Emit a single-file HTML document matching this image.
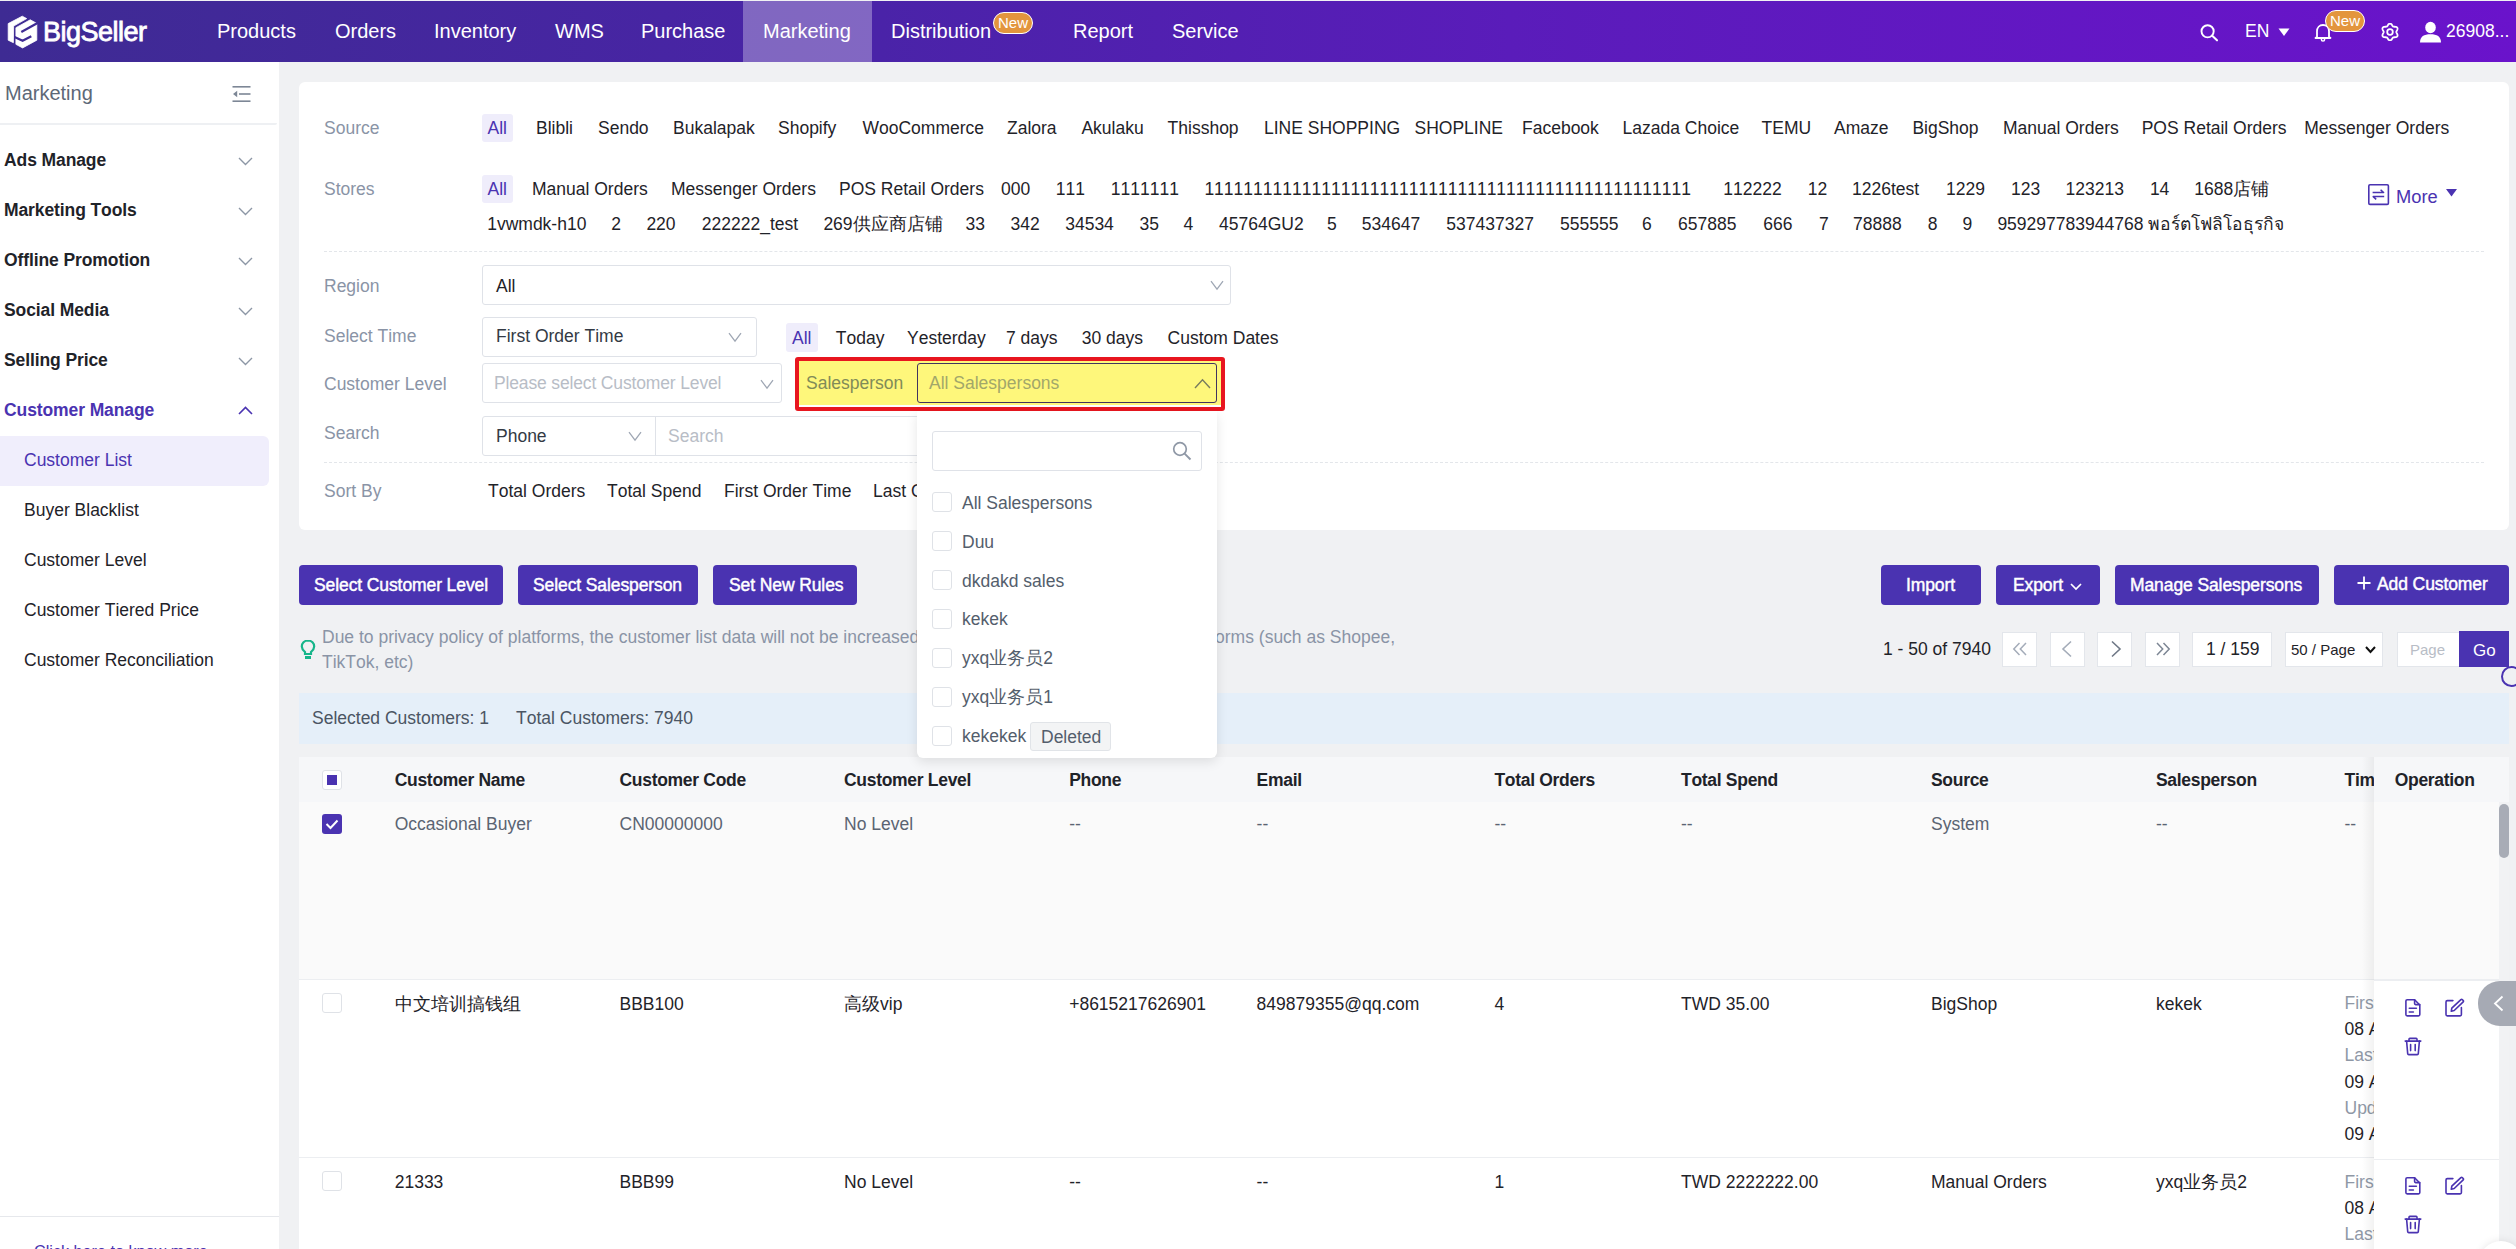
<!DOCTYPE html><html><head><meta charset="utf-8"><title>BigSeller Customer List</title><style>
*{margin:0;padding:0}
html,body{width:2516px;height:1249px;overflow:hidden;background:#f0f1f3}
body{position:relative;font-family:"Liberation Sans",sans-serif;font-kerning:none}
.t{position:absolute;white-space:nowrap}
.r{position:absolute}
.badge{background:#e3953d;border:1.5px solid #fff;border-radius:11px;box-sizing:border-box;color:#fff;font-size:15px;line-height:19px;text-align:center;font-family:"Liberation Sans",sans-serif}
</style></head><body>
<div class="r" style="left:0px;top:0px;width:2516px;height:1249px;background:#f0f1f3;"></div>
<div class="r" style="left:0px;top:1px;width:2516px;height:61px;background:linear-gradient(90deg,#3e2b93 0%,#4a23a8 35%,#5a1cba 60%,#6a13cb 100%);"></div>
<div class="r" style="left:743px;top:1px;width:129px;height:61px;background:rgba(255,255,255,0.31);"></div>
<svg class="r" style="left:0px;top:0px" width="45" height="55" viewBox="0 0 45 55">
<g fill="#fff" stroke="#fff" stroke-width="0.8" stroke-linejoin="round">
<path d="M8.2,23.6 L22.25,16.2 L26.7,18.6 L13.6,26.1 L13.4,42.7 L8.2,40.2 Z"/>
<path d="M15.9,27.7 L30.25,19.8 L36.8,23.4 L36.8,40.2 L22.6,47.9 L15.9,44.3 Z"/>
</g>
<g fill="none" stroke="#3f2b95" stroke-width="2.3">
<path d="M21.3,31.9 L38,22.8"/>
<path d="M14.5,37 L22.6,40.8 L31.3,36.2"/>
</g></svg>
<div class="t " style="left:43px;top:15.14px;font-size:27px;line-height:34px;color:#fff;letter-spacing:-0.5px;-webkit-text-stroke:0.8px #fff;">BigSeller</div>
<div class="t " style="left:217px;top:19.07px;font-size:20px;line-height:25px;color:#fff;">Products</div>
<div class="t " style="left:335px;top:19.07px;font-size:20px;line-height:25px;color:#fff;">Orders</div>
<div class="t " style="left:434px;top:19.07px;font-size:20px;line-height:25px;color:#fff;">Inventory</div>
<div class="t " style="left:555px;top:19.07px;font-size:20px;line-height:25px;color:#fff;">WMS</div>
<div class="t " style="left:641px;top:19.07px;font-size:20px;line-height:25px;color:#fff;">Purchase</div>
<div class="t " style="left:763px;top:19.07px;font-size:20px;line-height:25px;color:#fff;">Marketing</div>
<div class="t " style="left:891px;top:19.07px;font-size:20px;line-height:25px;color:#fff;">Distribution</div>
<div class="t " style="left:1073px;top:19.07px;font-size:20px;line-height:25px;color:#fff;">Report</div>
<div class="t " style="left:1172px;top:19.07px;font-size:20px;line-height:25px;color:#fff;">Service</div>
<div class="r badge" style="left:993px;top:12px;width:40px;height:22px;">New</div>
<svg class="r" style="left:2200px;top:24px" width="20" height="18" viewBox="0 0 20 18">
<circle cx="7.6" cy="7.3" r="6.1" fill="none" stroke="#fff" stroke-width="1.9"/>
<path d="M12.2,11.8 L17,16.3" stroke="#fff" stroke-width="2.1" stroke-linecap="round"/></svg>
<div class="t " style="left:2245px;top:19.94px;font-size:17.5px;line-height:22px;color:#fff;">EN</div>
<svg class="r" style="left:2278px;top:28px" width="12" height="9" viewBox="0 0 12 9"><path d="M0.5,0.5 L11.5,0.5 L6,8 Z" fill="#fff"/></svg>
<svg class="r" style="left:2314px;top:23px" width="18" height="19" viewBox="0 0 18 19">
<path d="M3,13.8 L3,8.3 C3,4.6 5.4,2 9,2 C12.6,2 15,4.6 15,8.3 L15,13.8 L16.5,15 L1.5,15 Z" fill="none" stroke="#fff" stroke-width="1.8" stroke-linejoin="round"/>
<circle cx="9" cy="16.4" r="1.6" fill="none" stroke="#fff" stroke-width="1.5"/></svg>
<div class="r badge" style="left:2325px;top:10px;width:40px;height:22px;">New</div>
<svg class="r" style="left:2381px;top:22.5px" width="18" height="18" viewBox="0 0 18 18">
<path d="M9.00,0.50 L9.73,0.68 L10.38,1.17 L10.92,1.85 L11.34,2.56 L11.72,3.16 L12.15,3.54 L12.70,3.72 L13.40,3.75 L14.23,3.77 L15.09,3.89 L15.84,4.21 L16.36,4.75 L16.57,5.47 L16.47,6.28 L16.15,7.08 L15.75,7.81 L15.42,8.44 L15.30,9.00 L15.42,9.56 L15.75,10.19 L16.15,10.92 L16.47,11.72 L16.57,12.53 L16.36,13.25 L15.84,13.79 L15.09,14.11 L14.23,14.23 L13.40,14.25 L12.70,14.28 L12.15,14.46 L11.72,14.84 L11.34,15.44 L10.92,16.15 L10.38,16.83 L9.73,17.32 L9.00,17.50 L8.27,17.32 L7.62,16.83 L7.08,16.15 L6.66,15.44 L6.28,14.84 L5.85,14.46 L5.30,14.28 L4.60,14.25 L3.77,14.23 L2.91,14.11 L2.16,13.79 L1.64,13.25 L1.43,12.53 L1.53,11.72 L1.85,10.92 L2.25,10.19 L2.58,9.56 L2.70,9.00 L2.58,8.44 L2.25,7.81 L1.85,7.08 L1.53,6.28 L1.43,5.47 L1.64,4.75 L2.16,4.21 L2.91,3.89 L3.77,3.77 L4.60,3.75 L5.30,3.72 L5.85,3.54 L6.28,3.16 L6.66,2.56 L7.08,1.85 L7.62,1.17 L8.27,0.68 L9.00,0.50 Z" fill="none" stroke="#fff" stroke-width="1.8" stroke-linejoin="round"/>
<circle cx="9" cy="9" r="2.8" fill="none" stroke="#fff" stroke-width="1.8"/></svg>
<svg class="r" style="left:2419px;top:21px" width="23" height="22" viewBox="0 0 23 22">
<ellipse cx="11.5" cy="6.5" rx="5.3" ry="5.8" fill="#fff"/>
<path d="M1,21.5 C1,15.5 5,13.3 11.5,13.3 C18,13.3 22,15.5 22,21.5 Z" fill="#fff"/></svg>
<div class="t " style="left:2446px;top:20.44px;font-size:17.5px;line-height:22px;color:#fff;">26908...</div>
<div class="r" style="left:0px;top:62px;width:279px;height:1187px;background:#fff;"></div>
<div class="r" style="left:0px;top:123px;width:277px;height:1.5px;background:#eef0f3;border-radius:0 0 3px 0;"></div>
<div class="t " style="left:5px;top:80.57px;font-size:20px;line-height:25px;color:#5d6877;">Marketing</div>
<svg class="r" style="left:232px;top:85px" width="19" height="18" viewBox="0 0 19 18">
<rect x="0.5" y="1" width="18" height="1.6" fill="#7d8796"/>
<rect x="7" y="8.2" width="11.5" height="1.6" fill="#7d8796"/>
<rect x="0.5" y="15.4" width="18" height="1.6" fill="#7d8796"/>
<path d="M1,9 L5.2,5.8 L5.2,12.2 Z" fill="#7d8796"/></svg>
<div class="t " style="left:4px;top:148.94px;font-size:17.5px;line-height:22px;color:#1f2329;font-weight:700;letter-spacing:-0.1px;">Ads Manage</div>
<svg class="r" style="left:238px;top:157px" width="15" height="9" viewBox="0 0 15 9"><path d="M1,1 L7.5,7.5 L14,1" fill="none" stroke="#8d97a6" stroke-width="1.4"/></svg>
<div class="t " style="left:4px;top:198.94px;font-size:17.5px;line-height:22px;color:#1f2329;font-weight:700;letter-spacing:-0.1px;">Marketing Tools</div>
<svg class="r" style="left:238px;top:207px" width="15" height="9" viewBox="0 0 15 9"><path d="M1,1 L7.5,7.5 L14,1" fill="none" stroke="#8d97a6" stroke-width="1.4"/></svg>
<div class="t " style="left:4px;top:248.94px;font-size:17.5px;line-height:22px;color:#1f2329;font-weight:700;letter-spacing:-0.1px;">Offline Promotion</div>
<svg class="r" style="left:238px;top:257px" width="15" height="9" viewBox="0 0 15 9"><path d="M1,1 L7.5,7.5 L14,1" fill="none" stroke="#8d97a6" stroke-width="1.4"/></svg>
<div class="t " style="left:4px;top:298.94px;font-size:17.5px;line-height:22px;color:#1f2329;font-weight:700;letter-spacing:-0.1px;">Social Media</div>
<svg class="r" style="left:238px;top:307px" width="15" height="9" viewBox="0 0 15 9"><path d="M1,1 L7.5,7.5 L14,1" fill="none" stroke="#8d97a6" stroke-width="1.4"/></svg>
<div class="t " style="left:4px;top:348.94px;font-size:17.5px;line-height:22px;color:#1f2329;font-weight:700;letter-spacing:-0.1px;">Selling Price</div>
<svg class="r" style="left:238px;top:357px" width="15" height="9" viewBox="0 0 15 9"><path d="M1,1 L7.5,7.5 L14,1" fill="none" stroke="#8d97a6" stroke-width="1.4"/></svg>
<div class="t " style="left:4px;top:398.94px;font-size:17.5px;line-height:22px;color:#4a33b1;font-weight:700;letter-spacing:-0.1px;">Customer Manage</div>
<svg class="r" style="left:238px;top:406px" width="15" height="9" viewBox="0 0 15 9"><path d="M1,8 L7.5,1.5 L14,8" fill="none" stroke="#4a33b1" stroke-width="1.6"/></svg>
<div class="r" style="left:0px;top:436px;width:269px;height:50px;background:#f0eefc;border-radius:0 6px 6px 0;"></div>
<div class="t " style="left:24px;top:448.94px;font-size:17.5px;line-height:22px;color:#4a33b1;">Customer List</div>
<div class="t " style="left:24px;top:498.94px;font-size:17.5px;line-height:22px;color:#1f2329;">Buyer Blacklist</div>
<div class="t " style="left:24px;top:548.94px;font-size:17.5px;line-height:22px;color:#1f2329;">Customer Level</div>
<div class="t " style="left:24px;top:598.94px;font-size:17.5px;line-height:22px;color:#1f2329;">Customer Tiered Price</div>
<div class="t " style="left:24px;top:648.94px;font-size:17.5px;line-height:22px;color:#1f2329;">Customer Reconciliation</div>
<div class="r" style="left:0px;top:1216px;width:279px;height:1px;background:#e6e8ec;"></div>
<div class="t " style="left:34px;top:1241.39px;font-size:16.2px;line-height:20px;color:#4a33b1;">Click here to know more</div>
<div class="r" style="left:299px;top:82px;width:2210px;height:448px;background:#fff;border-radius:6px;"></div>
<div class="t " style="left:324px;top:116.94px;font-size:17.5px;line-height:22px;color:#8a94a6;">Source</div>
<div class="r" style="left:482px;top:114px;width:31px;height:28px;background:#efedfb;border-radius:3px;"></div>
<div class="t " style="left:487.5px;top:116.94px;font-size:17.5px;line-height:22px;color:#4a33b1;">All</div>
<div class="t " style="left:536px;top:116.94px;font-size:17.5px;line-height:22px;color:#1f2329;">Blibli</div>
<div class="t " style="left:598px;top:116.94px;font-size:17.5px;line-height:22px;color:#1f2329;">Sendo</div>
<div class="t " style="left:673px;top:116.94px;font-size:17.5px;line-height:22px;color:#1f2329;">Bukalapak</div>
<div class="t " style="left:778px;top:116.94px;font-size:17.5px;line-height:22px;color:#1f2329;">Shopify</div>
<div class="t " style="left:862.5px;top:116.94px;font-size:17.5px;line-height:22px;color:#1f2329;">WooCommerce</div>
<div class="t " style="left:1007px;top:116.94px;font-size:17.5px;line-height:22px;color:#1f2329;">Zalora</div>
<div class="t " style="left:1081.4px;top:116.94px;font-size:17.5px;line-height:22px;color:#1f2329;">Akulaku</div>
<div class="t " style="left:1167.6px;top:116.94px;font-size:17.5px;line-height:22px;color:#1f2329;">Thisshop</div>
<div class="t " style="left:1264px;top:116.94px;font-size:17.5px;line-height:22px;color:#1f2329;">LINE SHOPPING</div>
<div class="t " style="left:1414.5px;top:116.94px;font-size:17.5px;line-height:22px;color:#1f2329;">SHOPLINE</div>
<div class="t " style="left:1522px;top:116.94px;font-size:17.5px;line-height:22px;color:#1f2329;">Facebook</div>
<div class="t " style="left:1622.6px;top:116.94px;font-size:17.5px;line-height:22px;color:#1f2329;">Lazada Choice</div>
<div class="t " style="left:1761.6px;top:116.94px;font-size:17.5px;line-height:22px;color:#1f2329;">TEMU</div>
<div class="t " style="left:1834px;top:116.94px;font-size:17.5px;line-height:22px;color:#1f2329;">Amaze</div>
<div class="t " style="left:1912.4px;top:116.94px;font-size:17.5px;line-height:22px;color:#1f2329;">BigShop</div>
<div class="t " style="left:2003px;top:116.94px;font-size:17.5px;line-height:22px;color:#1f2329;">Manual Orders</div>
<div class="t " style="left:2141.7px;top:116.94px;font-size:17.5px;line-height:22px;color:#1f2329;">POS Retail Orders</div>
<div class="t " style="left:2304.3px;top:116.94px;font-size:17.5px;line-height:22px;color:#1f2329;">Messenger Orders</div>
<div class="t " style="left:324px;top:177.94px;font-size:17.5px;line-height:22px;color:#8a94a6;">Stores</div>
<div class="r" style="left:482px;top:175px;width:31px;height:28px;background:#efedfb;border-radius:3px;"></div>
<div class="t " style="left:487.5px;top:177.94px;font-size:17.5px;line-height:22px;color:#4a33b1;">All</div>
<div class="t " style="left:532px;top:177.94px;font-size:17.5px;line-height:22px;color:#1f2329;">Manual Orders</div>
<div class="t " style="left:671px;top:177.94px;font-size:17.5px;line-height:22px;color:#1f2329;">Messenger Orders</div>
<div class="t " style="left:839px;top:177.94px;font-size:17.5px;line-height:22px;color:#1f2329;">POS Retail Orders</div>
<div class="t " style="left:1001px;top:177.94px;font-size:17.5px;line-height:22px;color:#1f2329;">000</div>
<div class="t " style="left:1055.8px;top:177.94px;font-size:17.5px;line-height:22px;color:#1f2329;">111</div>
<div class="t " style="left:1110.8px;top:177.94px;font-size:17.5px;line-height:22px;color:#1f2329;">1111111</div>
<div class="t " style="left:1204.4px;top:177.94px;font-size:17.5px;line-height:22px;color:#1f2329;">11111111111111111111111111111111111111111111111111</div>
<div class="t " style="left:1723.3px;top:177.94px;font-size:17.5px;line-height:22px;color:#1f2329;">112222</div>
<div class="t " style="left:1807.7px;top:177.94px;font-size:17.5px;line-height:22px;color:#1f2329;">12</div>
<div class="t " style="left:1852px;top:177.94px;font-size:17.5px;line-height:22px;color:#1f2329;">1226test</div>
<div class="t " style="left:1946px;top:177.94px;font-size:17.5px;line-height:22px;color:#1f2329;">1229</div>
<div class="t " style="left:2011px;top:177.94px;font-size:17.5px;line-height:22px;color:#1f2329;">123</div>
<div class="t " style="left:2065.5px;top:177.94px;font-size:17.5px;line-height:22px;color:#1f2329;">123213</div>
<div class="t " style="left:2149.9px;top:177.94px;font-size:17.5px;line-height:22px;color:#1f2329;">14</div>
<div class="t " style="left:2194.3px;top:177.94px;font-size:17.5px;line-height:22px;color:#1f2329;">1688店铺</div>
<div class="t " style="left:487.2px;top:213.44px;font-size:17.5px;line-height:22px;color:#1f2329;">1vwmdk-h10</div>
<div class="t " style="left:611.3px;top:213.44px;font-size:17.5px;line-height:22px;color:#1f2329;">2</div>
<div class="t " style="left:646.4px;top:213.44px;font-size:17.5px;line-height:22px;color:#1f2329;">220</div>
<div class="t " style="left:701.8px;top:213.44px;font-size:17.5px;line-height:22px;color:#1f2329;">222222_test</div>
<div class="t " style="left:823.4px;top:213.44px;font-size:17.5px;line-height:22px;color:#1f2329;">269供应商店铺</div>
<div class="t " style="left:965.5px;top:213.44px;font-size:17.5px;line-height:22px;color:#1f2329;">33</div>
<div class="t " style="left:1010.5px;top:213.44px;font-size:17.5px;line-height:22px;color:#1f2329;">342</div>
<div class="t " style="left:1065.2px;top:213.44px;font-size:17.5px;line-height:22px;color:#1f2329;">34534</div>
<div class="t " style="left:1139.5px;top:213.44px;font-size:17.5px;line-height:22px;color:#1f2329;">35</div>
<div class="t " style="left:1183.5px;top:213.44px;font-size:17.5px;line-height:22px;color:#1f2329;">4</div>
<div class="t " style="left:1219px;top:213.44px;font-size:17.5px;line-height:22px;color:#1f2329;">45764GU2</div>
<div class="t " style="left:1327px;top:213.44px;font-size:17.5px;line-height:22px;color:#1f2329;">5</div>
<div class="t " style="left:1361.8px;top:213.44px;font-size:17.5px;line-height:22px;color:#1f2329;">534647</div>
<div class="t " style="left:1446.3px;top:213.44px;font-size:17.5px;line-height:22px;color:#1f2329;">537437327</div>
<div class="t " style="left:1560px;top:213.44px;font-size:17.5px;line-height:22px;color:#1f2329;">555555</div>
<div class="t " style="left:1642px;top:213.44px;font-size:17.5px;line-height:22px;color:#1f2329;">6</div>
<div class="t " style="left:1678px;top:213.44px;font-size:17.5px;line-height:22px;color:#1f2329;">657885</div>
<div class="t " style="left:1763.2px;top:213.44px;font-size:17.5px;line-height:22px;color:#1f2329;">666</div>
<div class="t " style="left:1819px;top:213.44px;font-size:17.5px;line-height:22px;color:#1f2329;">7</div>
<div class="t " style="left:1853px;top:213.44px;font-size:17.5px;line-height:22px;color:#1f2329;">78888</div>
<div class="t " style="left:1927.7px;top:213.44px;font-size:17.5px;line-height:22px;color:#1f2329;">8</div>
<div class="t " style="left:1962.4px;top:213.44px;font-size:17.5px;line-height:22px;color:#1f2329;">9</div>
<div class="t " style="left:1997.4px;top:213.44px;font-size:17.5px;line-height:22px;color:#1f2329;">959297783944768 พอร์ตโฟลิโอธุรกิจ</div>
<svg class="r" style="left:2367px;top:183px" width="23" height="23" viewBox="0 0 23 23">
<rect x="1.8" y="1.8" width="19.6" height="19.6" rx="1.2" fill="none" stroke="#4a33b1" stroke-width="1.6"/>
<path d="M5.6,9.6 L16.6,9.6 L13.6,6.8" fill="none" stroke="#4a33b1" stroke-width="1.5" stroke-linejoin="round"/>
<path d="M17.2,13.6 L6.2,13.6 L9.2,16.4" fill="none" stroke="#4a33b1" stroke-width="1.5" stroke-linejoin="round"/></svg>
<div class="t " style="left:2396px;top:184.66px;font-size:18.3px;line-height:23px;color:#4a33b1;">More</div>
<svg class="r" style="left:2445.5px;top:189px" width="11" height="8" viewBox="0 0 11 8"><path d="M0,0 L11,0 L5.5,7.5 Z" fill="#4a33b1"/></svg>
<div class="r" style="left:324px;top:251px;width:2160px;height:0px;border-top:1px dashed #e3e6ea;"></div>
<div class="t " style="left:324px;top:274.54px;font-size:17.5px;line-height:22px;color:#8a94a6;">Region</div>
<div class="r" style="left:482px;top:265px;width:749px;height:40px;border:1px solid #dfe2e8;border-radius:3px;box-sizing:border-box;background:#fff;"></div>
<div class="t " style="left:496px;top:274.94px;font-size:17.5px;line-height:22px;color:#1f2329;">All</div>
<svg class="r" style="left:1210px;top:280px" width="14" height="11" viewBox="0 0 14 11"><path d="M1,1.2 L7,9.2 L13,1.2" fill="none" stroke="#9ea6b3" stroke-width="1.25"/></svg>
<div class="t " style="left:324px;top:324.94px;font-size:17.5px;line-height:22px;color:#8a94a6;">Select Time</div>
<div class="r" style="left:482px;top:317px;width:275px;height:40px;border:1px solid #dfe2e8;border-radius:3px;box-sizing:border-box;background:#fff;"></div>
<div class="t " style="left:496px;top:325.44px;font-size:17.5px;line-height:22px;color:#333a44;">First Order Time</div>
<svg class="r" style="left:728px;top:332px" width="14" height="11" viewBox="0 0 14 11"><path d="M1,1.2 L7,9.2 L13,1.2" fill="none" stroke="#9ea6b3" stroke-width="1.25"/></svg>
<div class="r" style="left:786px;top:323px;width:32px;height:29px;background:#efedfb;border-radius:3px;"></div>
<div class="t " style="left:792px;top:326.94px;font-size:17.5px;line-height:22px;color:#4a33b1;">All</div>
<div class="t " style="left:835.8px;top:326.94px;font-size:17.5px;line-height:22px;color:#1f2329;">Today</div>
<div class="t " style="left:907px;top:326.94px;font-size:17.5px;line-height:22px;color:#1f2329;">Yesterday</div>
<div class="t " style="left:1006px;top:326.94px;font-size:17.5px;line-height:22px;color:#1f2329;">7 days</div>
<div class="t " style="left:1081.8px;top:326.94px;font-size:17.5px;line-height:22px;color:#1f2329;">30 days</div>
<div class="t " style="left:1167.6px;top:326.94px;font-size:17.5px;line-height:22px;color:#1f2329;">Custom Dates</div>
<div class="t " style="left:324px;top:372.94px;font-size:17.5px;line-height:22px;color:#8a94a6;">Customer Level</div>
<div class="r" style="left:482px;top:363px;width:300px;height:40px;border:1px solid #dfe2e8;border-radius:3px;box-sizing:border-box;background:#fff;"></div>
<div class="t " style="left:494px;top:371.94px;font-size:17.5px;line-height:22px;color:#b8bdc6;letter-spacing:-0.15px;">Please select Customer Level</div>
<svg class="r" style="left:760px;top:378.5px" width="14" height="11" viewBox="0 0 14 11"><path d="M1,1.2 L7,9.2 L13,1.2" fill="none" stroke="#9ea6b3" stroke-width="1.25"/></svg>
<div class="t " style="left:324px;top:421.94px;font-size:17.5px;line-height:22px;color:#8a94a6;">Search</div>
<div class="r" style="left:482px;top:416px;width:650px;height:40px;border:1px solid #dfe2e8;border-radius:3px;box-sizing:border-box;background:#fff;"></div>
<div class="r" style="left:655px;top:416px;width:1px;height:40px;background:#dfe2e8;"></div>
<div class="t " style="left:496px;top:424.94px;font-size:17.5px;line-height:22px;color:#333a44;">Phone</div>
<svg class="r" style="left:627.5px;top:431px" width="14" height="11" viewBox="0 0 14 11"><path d="M1,1.2 L7,9.2 L13,1.2" fill="none" stroke="#9ea6b3" stroke-width="1.25"/></svg>
<div class="t " style="left:668px;top:424.94px;font-size:17.5px;line-height:22px;color:#b8bdc6;">Search</div>
<div class="r" style="left:324px;top:462px;width:2160px;height:0px;border-top:1px dashed #e3e6ea;"></div>
<div class="t " style="left:324px;top:479.64px;font-size:17.5px;line-height:22px;color:#8a94a6;">Sort By</div>
<div class="t " style="left:488px;top:479.94px;font-size:17.5px;line-height:22px;color:#1f2329;">Total Orders</div>
<div class="t " style="left:607px;top:479.94px;font-size:17.5px;line-height:22px;color:#1f2329;">Total Spend</div>
<div class="t " style="left:724px;top:479.94px;font-size:17.5px;line-height:22px;color:#1f2329;">First Order Time</div>
<div class="t " style="left:873px;top:479.94px;font-size:17.5px;line-height:22px;color:#1f2329;">Last Order Time</div>
<div class="r" style="left:795px;top:357px;width:430px;height:54px;border:4px solid #e8161f;border-radius:3px;box-sizing:border-box;background:#fff;"></div>
<div class="r" style="left:799px;top:361px;width:422px;height:44px;background:#fef77b;"></div>
<div class="t " style="left:806px;top:371.94px;font-size:17.5px;line-height:22px;color:#818b58;">Salesperson</div>
<div class="r" style="left:917px;top:363px;width:300px;height:40px;border:1.5px solid #41345f;border-radius:3px;box-sizing:border-box;"></div>
<div class="t " style="left:929px;top:371.94px;font-size:17.5px;line-height:22px;color:#a2a76a;">All Salespersons</div>
<svg class="r" style="left:1194px;top:378px" width="17" height="11" viewBox="0 0 17 11"><path d="M1,10 L8.5,1.8 L16,10" fill="none" stroke="#787c5e" stroke-width="1.4"/></svg>
<div class="r" style="left:299px;top:565px;width:204px;height:40px;background:#4a33b1;border-radius:4px;"></div>
<div class="t " style="left:314px;top:574.44px;font-size:17.5px;line-height:22px;color:#fff;letter-spacing:-0.1px;-webkit-text-stroke:0.45px #fff;">Select Customer Level</div>
<div class="r" style="left:518px;top:565px;width:180px;height:40px;background:#4a33b1;border-radius:4px;"></div>
<div class="t " style="left:533px;top:574.44px;font-size:17.5px;line-height:22px;color:#fff;letter-spacing:-0.1px;-webkit-text-stroke:0.45px #fff;">Select Salesperson</div>
<div class="r" style="left:713px;top:565px;width:144px;height:40px;background:#4a33b1;border-radius:4px;"></div>
<div class="t " style="left:729px;top:574.44px;font-size:17.5px;line-height:22px;color:#fff;letter-spacing:-0.1px;-webkit-text-stroke:0.45px #fff;">Set New Rules</div>
<div class="r" style="left:1881px;top:565px;width:100px;height:40px;background:#4a33b1;border-radius:4px;"></div>
<div class="t " style="left:1906px;top:574.44px;font-size:17.5px;line-height:22px;color:#fff;letter-spacing:-0.1px;-webkit-text-stroke:0.45px #fff;">Import</div>
<div class="r" style="left:1996px;top:565px;width:104px;height:40px;background:#4a33b1;border-radius:4px;"></div>
<div class="t " style="left:2013px;top:574.44px;font-size:17.5px;line-height:22px;color:#fff;letter-spacing:-0.1px;-webkit-text-stroke:0.45px #fff;">Export</div>
<svg class="r" style="left:2070px;top:583px" width="12" height="8" viewBox="0 0 12 8"><path d="M1,1 L6,6 L11,1" fill="none" stroke="#fff" stroke-width="1.7"/></svg>
<div class="r" style="left:2115px;top:565px;width:204px;height:40px;background:#4a33b1;border-radius:4px;"></div>
<div class="t " style="left:2130px;top:574.44px;font-size:17.5px;line-height:22px;color:#fff;letter-spacing:-0.1px;-webkit-text-stroke:0.45px #fff;">Manage Salespersons</div>
<div class="r" style="left:2334px;top:565px;width:175px;height:40px;background:#4a33b1;border-radius:4px;"></div>
<svg class="r" style="left:2357px;top:576px" width="14" height="14" viewBox="0 0 14 14"><path d="M7,0.5 L7,13.5 M0.5,7 L13.5,7" stroke="#fff" stroke-width="1.8"/></svg>
<div class="t " style="left:2377px;top:572.94px;font-size:17.5px;line-height:22px;color:#fff;letter-spacing:-0.1px;-webkit-text-stroke:0.45px #fff;">Add Customer</div>
<svg class="r" style="left:300px;top:639px" width="16" height="21" viewBox="0 0 16 21">
<path d="M8,1.5 C4.3,1.5 1.8,4.2 1.8,7.4 C1.8,10 3.5,11.6 5,13 L5,15 L11,15 L11,13 C12.5,11.6 14.2,10 14.2,7.4 C14.2,4.2 11.7,1.5 8,1.5 Z" fill="none" stroke="#16b58a" stroke-width="2.2"/>
<rect x="5" y="17" width="6" height="3" fill="#16b58a"/></svg>
<div class="t " style="left:322px;top:625.54px;font-size:17.5px;line-height:22px;color:#8a94a6;">Due to privacy policy of platforms, the customer list data will not be increased</div>
<div class="t " style="left:1200px;top:625.54px;font-size:17.5px;line-height:22px;color:#8a94a6;width:195px;text-align:right;">tforms (such as Shopee,</div>
<div class="t " style="left:322px;top:651.34px;font-size:17.5px;line-height:22px;color:#8a94a6;">TikTok, etc)</div>
<div class="t " style="left:1883px;top:638.34px;font-size:17.5px;line-height:22px;color:#1f2329;">1 - 50 of 7940</div>
<div class="r" style="left:2002px;top:632px;width:35px;height:35px;background:#fff;border:1px solid #e3e6eb;box-sizing:border-box;"></div>
<div class="r" style="left:2050px;top:632px;width:35px;height:35px;background:#fff;border:1px solid #e3e6eb;box-sizing:border-box;"></div>
<div class="r" style="left:2097px;top:632px;width:35px;height:35px;background:#fff;border:1px solid #e3e6eb;box-sizing:border-box;"></div>
<div class="r" style="left:2145px;top:632px;width:35px;height:35px;background:#fff;border:1px solid #e3e6eb;box-sizing:border-box;"></div>
<svg class="r" style="left:2012px;top:642px" width="17" height="15" viewBox="0 0 17 15"><path d="M7.5,1 L1.8,7 L7.5,13 M14,1 L8.3,7 L14,13" fill="none" stroke="#a4acb9" stroke-width="1.5"/></svg>
<svg class="r" style="left:2060px;top:640px" width="14" height="18" viewBox="0 0 14 18"><path d="M11,1.5 L3,9 L11,16.5" fill="none" stroke="#a4acb9" stroke-width="1.6"/></svg>
<svg class="r" style="left:2108.5px;top:640px" width="14" height="18" viewBox="0 0 14 18"><path d="M3,1.5 L11,9 L3,16.5" fill="none" stroke="#6f7886" stroke-width="1.6"/></svg>
<svg class="r" style="left:2155px;top:642px" width="17" height="15" viewBox="0 0 17 15"><path d="M2,1 L7.7,7 L2,13 M8.5,1 L14.2,7 L8.5,13" fill="none" stroke="#7d8694" stroke-width="1.5"/></svg>
<div class="r" style="left:2192px;top:632px;width:80px;height:35px;background:#fff;border:1px solid #e3e6eb;box-sizing:border-box;"></div>
<div class="t " style="left:2206px;top:638.34px;font-size:17.5px;line-height:22px;color:#1f2329;">1 / 159</div>
<div class="r" style="left:2285px;top:632px;width:98px;height:35px;background:#fff;border:1px solid #e3e6eb;box-sizing:border-box;"></div>
<div class="t " style="left:2291px;top:640.30px;font-size:15px;line-height:19px;color:#1f2329;">50 / Page</div>
<svg class="r" style="left:2365px;top:646px" width="11" height="8" viewBox="0 0 11 8"><path d="M1,1 L5.5,6 L10,1" fill="none" stroke="#111" stroke-width="2"/></svg>
<div class="r" style="left:2397px;top:632px;width:63px;height:35px;background:#fff;border:1px solid #e3e6eb;border-right:none;box-sizing:border-box;"></div>
<div class="t " style="left:2410px;top:640.30px;font-size:15px;line-height:19px;color:#b8bdc6;">Page</div>
<div class="r" style="left:2459px;top:631px;width:50px;height:36px;background:#4a33b1;"></div>
<div class="t " style="left:2473px;top:639.61px;font-size:17px;line-height:21px;color:#fff;">Go</div>
<div class="r" style="left:2501px;top:666px;width:21px;height:21px;border:2.5px solid #4a33b1;border-radius:50%;box-sizing:border-box;"></div>
<div class="r" style="left:299px;top:693px;width:2210px;height:51px;background:#e5eff9;"></div>
<div class="t " style="left:312px;top:707.34px;font-size:17.5px;line-height:22px;color:#4b5563;">Selected Customers: 1</div>
<div class="t " style="left:516px;top:707.34px;font-size:17.5px;line-height:22px;color:#4b5563;">Total Customers: 7940</div>
<div class="r" style="left:299px;top:757px;width:2210px;height:492px;background:#fff;"></div>
<div class="r" style="left:299px;top:757px;width:2200px;height:45px;background:#f6f7f9;"></div>
<div class="r" style="left:299px;top:802px;width:2200px;height:177px;background:#fafafa;"></div>
<div class="r" style="left:299px;top:979px;width:2200px;height:1px;background:#eceef1;"></div>
<div class="r" style="left:299px;top:1157px;width:2200px;height:1px;background:#eceef1;"></div>
<div class="r" style="left:0;top:0;width:2374px;height:1249px;overflow:hidden;">
<div class="t " style="left:394.7px;top:769.34px;font-size:17.5px;line-height:22px;color:#1f2329;font-weight:700;letter-spacing:-0.3px;">Customer Name</div>
<div class="t " style="left:619.5px;top:769.34px;font-size:17.5px;line-height:22px;color:#1f2329;font-weight:700;letter-spacing:-0.3px;">Customer Code</div>
<div class="t " style="left:844px;top:769.34px;font-size:17.5px;line-height:22px;color:#1f2329;font-weight:700;letter-spacing:-0.3px;">Customer Level</div>
<div class="t " style="left:1069.2px;top:769.34px;font-size:17.5px;line-height:22px;color:#1f2329;font-weight:700;letter-spacing:-0.3px;">Phone</div>
<div class="t " style="left:1256.6px;top:769.34px;font-size:17.5px;line-height:22px;color:#1f2329;font-weight:700;letter-spacing:-0.3px;">Email</div>
<div class="t " style="left:1494.4px;top:769.34px;font-size:17.5px;line-height:22px;color:#1f2329;font-weight:700;letter-spacing:-0.3px;">Total Orders</div>
<div class="t " style="left:1681px;top:769.34px;font-size:17.5px;line-height:22px;color:#1f2329;font-weight:700;letter-spacing:-0.3px;">Total Spend</div>
<div class="t " style="left:1931px;top:769.34px;font-size:17.5px;line-height:22px;color:#1f2329;font-weight:700;letter-spacing:-0.3px;">Source</div>
<div class="t " style="left:2156px;top:769.34px;font-size:17.5px;line-height:22px;color:#1f2329;font-weight:700;letter-spacing:-0.3px;">Salesperson</div>
<div class="t " style="left:2344.5px;top:769.34px;font-size:17.5px;line-height:22px;color:#1f2329;font-weight:700;letter-spacing:-0.3px;">Time</div>
<div class="t " style="left:394.7px;top:813.24px;font-size:17.5px;line-height:22px;color:#5b6472;">Occasional Buyer</div>
<div class="t " style="left:619.5px;top:813.24px;font-size:17.5px;line-height:22px;color:#5b6472;">CN00000000</div>
<div class="t " style="left:844px;top:813.24px;font-size:17.5px;line-height:22px;color:#5b6472;">No Level</div>
<div class="t " style="left:1069.2px;top:813.24px;font-size:17.5px;line-height:22px;color:#5b6472;">--</div>
<div class="t " style="left:1256.6px;top:813.24px;font-size:17.5px;line-height:22px;color:#5b6472;">--</div>
<div class="t " style="left:1494.4px;top:813.24px;font-size:17.5px;line-height:22px;color:#5b6472;">--</div>
<div class="t " style="left:1681px;top:813.24px;font-size:17.5px;line-height:22px;color:#5b6472;">--</div>
<div class="t " style="left:1931px;top:813.24px;font-size:17.5px;line-height:22px;color:#5b6472;">System</div>
<div class="t " style="left:2156px;top:813.24px;font-size:17.5px;line-height:22px;color:#5b6472;">--</div>
<div class="t " style="left:2344.5px;top:813.24px;font-size:17.5px;line-height:22px;color:#5b6472;">--</div>
<div class="t " style="left:394.7px;top:992.94px;font-size:17.5px;line-height:22px;color:#1f2329;">中文培训搞钱组</div>
<div class="t " style="left:619.5px;top:992.94px;font-size:17.5px;line-height:22px;color:#1f2329;">BBB100</div>
<div class="t " style="left:844px;top:992.94px;font-size:17.5px;line-height:22px;color:#1f2329;">高级vip</div>
<div class="t " style="left:1069.2px;top:992.94px;font-size:17.5px;line-height:22px;color:#1f2329;">+8615217626901</div>
<div class="t " style="left:1256.6px;top:992.94px;font-size:17.5px;line-height:22px;color:#1f2329;">849879355@qq.com</div>
<div class="t " style="left:1494.4px;top:992.94px;font-size:17.5px;line-height:22px;color:#1f2329;">4</div>
<div class="t " style="left:1681px;top:992.94px;font-size:17.5px;line-height:22px;color:#1f2329;">TWD 35.00</div>
<div class="t " style="left:1931px;top:992.94px;font-size:17.5px;line-height:22px;color:#1f2329;">BigShop</div>
<div class="t " style="left:2156px;top:992.94px;font-size:17.5px;line-height:22px;color:#1f2329;">kekek</div>
<div class="t " style="left:394.7px;top:1170.94px;font-size:17.5px;line-height:22px;color:#1f2329;">21333</div>
<div class="t " style="left:619.5px;top:1170.94px;font-size:17.5px;line-height:22px;color:#1f2329;">BBB99</div>
<div class="t " style="left:844px;top:1170.94px;font-size:17.5px;line-height:22px;color:#1f2329;">No Level</div>
<div class="t " style="left:1069.2px;top:1170.94px;font-size:17.5px;line-height:22px;color:#1f2329;">--</div>
<div class="t " style="left:1256.6px;top:1170.94px;font-size:17.5px;line-height:22px;color:#1f2329;">--</div>
<div class="t " style="left:1494.4px;top:1170.94px;font-size:17.5px;line-height:22px;color:#1f2329;">1</div>
<div class="t " style="left:1681px;top:1170.94px;font-size:17.5px;line-height:22px;color:#1f2329;">TWD 2222222.00</div>
<div class="t " style="left:1931px;top:1170.94px;font-size:17.5px;line-height:22px;color:#1f2329;">Manual Orders</div>
<div class="t " style="left:2156px;top:1170.94px;font-size:17.5px;line-height:22px;color:#1f2329;">yxq业务员2</div>
<div class="t " style="left:2344.5px;top:991.94px;font-size:17.5px;line-height:22px;color:#8f98a6;">First Order Time:</div>
<div class="t " style="left:2344.5px;top:1018.14px;font-size:17.5px;line-height:22px;color:#1f2329;">08 Apr 2024 10:00</div>
<div class="t " style="left:2344.5px;top:1044.34px;font-size:17.5px;line-height:22px;color:#8f98a6;">Last Order Time:</div>
<div class="t " style="left:2344.5px;top:1070.54px;font-size:17.5px;line-height:22px;color:#1f2329;">09 Apr 2024 10:00</div>
<div class="t " style="left:2344.5px;top:1096.74px;font-size:17.5px;line-height:22px;color:#8f98a6;">Updated Time:</div>
<div class="t " style="left:2344.5px;top:1122.94px;font-size:17.5px;line-height:22px;color:#1f2329;">09 Apr 2024 10:00</div>
<div class="t " style="left:2344.5px;top:1170.94px;font-size:17.5px;line-height:22px;color:#8f98a6;">First Order Time:</div>
<div class="t " style="left:2344.5px;top:1197.14px;font-size:17.5px;line-height:22px;color:#1f2329;">08 Apr 2024 10:00</div>
<div class="t " style="left:2344.5px;top:1223.34px;font-size:17.5px;line-height:22px;color:#8f98a6;">Last Order Time:</div>
</div>
<div class="r" style="left:322px;top:770px;width:20px;height:20px;background:#fff;border:1px solid #dfe2e7;border-radius:3px;box-sizing:border-box;"></div>
<div class="r" style="left:327px;top:775px;width:10px;height:10px;background:#4a33b1;"></div>
<div class="r" style="left:322px;top:814px;width:20px;height:20px;background:#4a33b1;border-radius:3px;"></div>
<svg class="r" style="left:322px;top:814px" width="20" height="20" viewBox="0 0 20 20"><path d="M4.5,10 L8.5,14 L15.5,6.5" fill="none" stroke="#fff" stroke-width="2"/></svg>
<div class="r" style="left:322px;top:993px;width:20px;height:20px;background:#fff;border:1px solid #dfe2e7;border-radius:3px;box-sizing:border-box;"></div>
<div class="r" style="left:322px;top:1171px;width:20px;height:20px;background:#fff;border:1px solid #dfe2e7;border-radius:3px;box-sizing:border-box;"></div>
<div class="r" style="left:2362px;top:757px;width:12px;height:492px;background:linear-gradient(90deg,rgba(0,0,0,0),rgba(0,0,0,0.05));"></div>
<div class="r" style="left:2374px;top:757px;width:125px;height:45px;background:#f6f7f9;border-radius:0 6px 0 0;"></div>
<div class="r" style="left:2374px;top:802px;width:125px;height:177px;background:#fafafa;"></div>
<div class="r" style="left:2374px;top:980px;width:125px;height:269px;background:#fff;"></div>
<div class="r" style="left:2374px;top:980px;width:125px;height:1px;background:#eceef1;"></div>
<div class="r" style="left:2374px;top:1159px;width:125px;height:1px;background:#eceef1;"></div>
<div class="t " style="left:2394.7px;top:769.34px;font-size:17.5px;line-height:22px;color:#1f2329;font-weight:700;letter-spacing:-0.3px;">Operation</div>
<div class="r" style="left:2499px;top:757px;width:10px;height:45px;background:#f6f7f9;"></div>
<div class="r" style="left:2499px;top:802px;width:10px;height:447px;background:#f1f2f4;"></div>
<div class="r" style="left:2499px;top:804px;width:10px;height:54px;background:#a8acb6;border-radius:5px;"></div>
<svg class="r" style="left:2404px;top:998px" width="18" height="20" viewBox="0 0 18 20">
<g fill="none" stroke="#4a33b1" stroke-width="1.6" stroke-linejoin="round" stroke-linecap="round">
<path d="M3.2,1.8 L10.6,1.8 L15.8,7 L15.8,16.6 Q15.8,17.9 14.5,17.9 L3.2,17.9 Q1.9,17.9 1.9,16.6 L1.9,3.1 Q1.9,1.8 3.2,1.8 Z"/>
<path d="M10.6,1.8 L10.6,5.6 Q10.6,6.6 11.6,6.6 L15.8,6.6"/>
<path d="M5.3,10.2 L12.4,10.2 M5.3,14 L9.4,14"/></g></svg>
<svg class="r" style="left:2444px;top:998px" width="21" height="20" viewBox="0 0 21 20">
<g fill="none" stroke="#4a33b1" stroke-width="1.6" stroke-linejoin="round" stroke-linecap="round">
<path d="M8.9,2.6 L3.3,2.6 Q2,2.6 2,3.9 L2,16.6 Q2,17.9 3.3,17.9 L16.1,17.9 Q17.4,17.9 17.4,16.6 L17.4,9.5"/>
<path d="M7.3,13.2 L7.8,10.2 L16.9,1.6 Q17.6,1 18.3,1.6 L19.2,2.5 Q19.8,3.2 19.2,3.9 L10.2,12.5 Z"/></g></svg>
<svg class="r" style="left:2404px;top:1037px" width="18" height="19" viewBox="0 0 18 19">
<g fill="none" stroke="#4a33b1" stroke-width="1.6" stroke-linejoin="round" stroke-linecap="round">
<path d="M1.2,4.1 L16.8,4.1"/>
<path d="M5,4.1 L5,2.3 Q5,1.4 5.9,1.4 L12.1,1.4 Q13,1.4 13,2.3 L13,4.1"/>
<path d="M2.6,4.1 L3.7,16.6 Q3.8,17.6 4.8,17.6 L13.2,17.6 Q14.2,17.6 14.3,16.6 L15.4,4.1"/>
<path d="M6.6,7.6 L6.6,13.6 M11.2,7.6 L11.2,13.6"/></g></svg>
<svg class="r" style="left:2404px;top:1176px" width="18" height="20" viewBox="0 0 18 20">
<g fill="none" stroke="#4a33b1" stroke-width="1.6" stroke-linejoin="round" stroke-linecap="round">
<path d="M3.2,1.8 L10.6,1.8 L15.8,7 L15.8,16.6 Q15.8,17.9 14.5,17.9 L3.2,17.9 Q1.9,17.9 1.9,16.6 L1.9,3.1 Q1.9,1.8 3.2,1.8 Z"/>
<path d="M10.6,1.8 L10.6,5.6 Q10.6,6.6 11.6,6.6 L15.8,6.6"/>
<path d="M5.3,10.2 L12.4,10.2 M5.3,14 L9.4,14"/></g></svg>
<svg class="r" style="left:2444px;top:1176px" width="21" height="20" viewBox="0 0 21 20">
<g fill="none" stroke="#4a33b1" stroke-width="1.6" stroke-linejoin="round" stroke-linecap="round">
<path d="M8.9,2.6 L3.3,2.6 Q2,2.6 2,3.9 L2,16.6 Q2,17.9 3.3,17.9 L16.1,17.9 Q17.4,17.9 17.4,16.6 L17.4,9.5"/>
<path d="M7.3,13.2 L7.8,10.2 L16.9,1.6 Q17.6,1 18.3,1.6 L19.2,2.5 Q19.8,3.2 19.2,3.9 L10.2,12.5 Z"/></g></svg>
<svg class="r" style="left:2404px;top:1215px" width="18" height="19" viewBox="0 0 18 19">
<g fill="none" stroke="#4a33b1" stroke-width="1.6" stroke-linejoin="round" stroke-linecap="round">
<path d="M1.2,4.1 L16.8,4.1"/>
<path d="M5,4.1 L5,2.3 Q5,1.4 5.9,1.4 L12.1,1.4 Q13,1.4 13,2.3 L13,4.1"/>
<path d="M2.6,4.1 L3.7,16.6 Q3.8,17.6 4.8,17.6 L13.2,17.6 Q14.2,17.6 14.3,16.6 L15.4,4.1"/>
<path d="M6.6,7.6 L6.6,13.6 M11.2,7.6 L11.2,13.6"/></g></svg>
<div class="r" style="left:2478px;top:981px;width:60px;height:45px;background:#a6aab4;border-radius:22px 0 0 22px;"></div>
<svg class="r" style="left:2492px;top:995px" width="13" height="17" viewBox="0 0 13 17"><path d="M10.5,1.5 L3,8.5 L10.5,15.5" fill="none" stroke="#fff" stroke-width="1.8"/></svg>
<div class="r" style="left:2479px;top:1241px;width:44px;height:44px;background:#fff;border-radius:50%;box-shadow:0 0 8px rgba(0,0,0,0.10);"></div>
<div class="r" style="left:917px;top:411px;width:300px;height:347px;background:#fff;border-radius:0 0 6px 6px;box-shadow:0 4px 12px rgba(0,0,0,0.10);"></div>
<div class="r" style="left:932px;top:431px;width:270px;height:40px;background:#fff;border:1px solid #dfe2e8;border-radius:3px;box-sizing:border-box;"></div>
<svg class="r" style="left:1172px;top:441px" width="20" height="20" viewBox="0 0 20 20">
<circle cx="8" cy="8" r="6.3" fill="none" stroke="#8f98a6" stroke-width="1.7"/>
<path d="M12.6,12.6 L18.5,18.5" stroke="#8f98a6" stroke-width="1.9"/></svg>
<div class="r" style="left:932px;top:492px;width:20px;height:20px;background:#fff;border:1px solid #dfe2e7;border-radius:3px;box-sizing:border-box;"></div>
<div class="t " style="left:962px;top:491.74px;font-size:17.5px;line-height:22px;color:#545e6c;">All Salespersons</div>
<div class="r" style="left:932px;top:531px;width:20px;height:20px;background:#fff;border:1px solid #dfe2e7;border-radius:3px;box-sizing:border-box;"></div>
<div class="t " style="left:962px;top:530.64px;font-size:17.5px;line-height:22px;color:#545e6c;">Duu</div>
<div class="r" style="left:932px;top:570px;width:20px;height:20px;background:#fff;border:1px solid #dfe2e7;border-radius:3px;box-sizing:border-box;"></div>
<div class="t " style="left:962px;top:569.54px;font-size:17.5px;line-height:22px;color:#545e6c;">dkdakd sales</div>
<div class="r" style="left:932px;top:609px;width:20px;height:20px;background:#fff;border:1px solid #dfe2e7;border-radius:3px;box-sizing:border-box;"></div>
<div class="t " style="left:962px;top:608.44px;font-size:17.5px;line-height:22px;color:#545e6c;">kekek</div>
<div class="r" style="left:932px;top:648px;width:20px;height:20px;background:#fff;border:1px solid #dfe2e7;border-radius:3px;box-sizing:border-box;"></div>
<div class="t " style="left:962px;top:647.34px;font-size:17.5px;line-height:22px;color:#545e6c;">yxq业务员2</div>
<div class="r" style="left:932px;top:687px;width:20px;height:20px;background:#fff;border:1px solid #dfe2e7;border-radius:3px;box-sizing:border-box;"></div>
<div class="t " style="left:962px;top:686.24px;font-size:17.5px;line-height:22px;color:#545e6c;">yxq业务员1</div>
<div class="r" style="left:932px;top:726px;width:20px;height:20px;background:#fff;border:1px solid #dfe2e7;border-radius:3px;box-sizing:border-box;"></div>
<div class="t " style="left:962px;top:725.14px;font-size:17.5px;line-height:22px;color:#545e6c;">kekekek</div>
<div class="r" style="left:1030px;top:722px;width:81px;height:29px;background:#f3f4f5;border:1px solid #e1e4e8;border-radius:3px;box-sizing:border-box;"></div>
<div class="t " style="left:1041px;top:725.94px;font-size:17.5px;line-height:22px;color:#545e6c;">Deleted</div>
</body></html>
